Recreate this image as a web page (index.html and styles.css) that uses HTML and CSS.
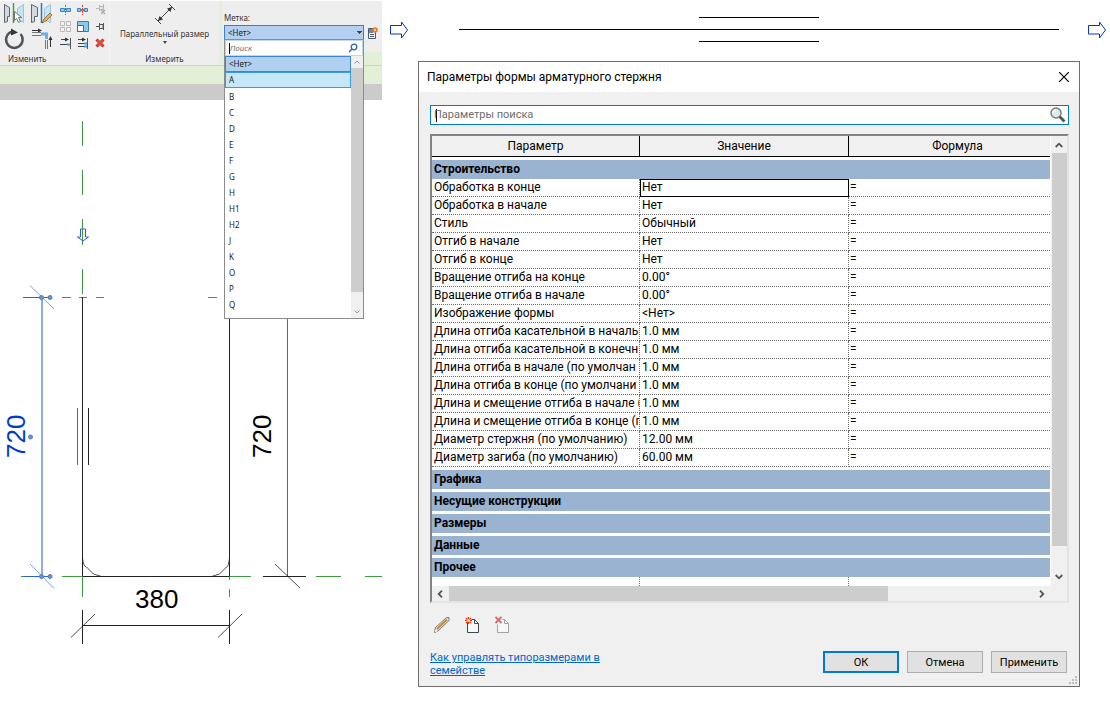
FILE: index.html
```html
<!DOCTYPE html>
<html lang="ru">
<head>
    <meta charset="UTF-8">
    <meta name="viewport" content="width=device-width, initial-scale=1.0">
    <title>Параметры формы арматурного стержня</title>
    <link rel="stylesheet" href="styles.css">
</head>
<body>
    <div class="sketch">
        <div class="ribbon">
            <div class="panel panel-edit">
                <svg class="tools" width="109" height="50" viewBox="0 1 109 50">
                    <!-- mirror by axis -->
                    <path d="M4.500 4.500l5 3v9h-2v5l-3 1z" fill="#d5d9de" stroke="#5d6670"/>
                    <path d="M17.500 8.500l6-4v18l-6-3z" fill="#c4e4f7" stroke="#9dc4dc"/>
                    <path d="M13.500 3v20" stroke="#3fa535" stroke-width="1.500"/>
                    <path d="M14.500 11.500v9l2-2 2 4 2-1-2-4h3z" fill="#fff" stroke="#555" stroke-width=".8"/>
                    <!-- mirror by drawn line -->
                    <path d="M31.500 4.500l6 3v9h-3v5l-3 1z" fill="#d5d9de" stroke="#5d6670"/>
                    <path d="M44.500 8.500l6-4v18l-6-3z" fill="#c4e4f7" stroke="#9dc4dc"/>
                    <path d="M41.500 3v20" stroke="#2378c8" stroke-width="1.500"/>
                    <path d="M42 23l2-4 6-6 2 2-6 6z" fill="#f4ae3d" stroke="#6b5437" stroke-width=".7"/>
                    <!-- rotate -->
                    <path d="M20.500 34a8.300 8.300 0 1 1-8-2.500" fill="none" stroke="#4d5359" stroke-width="2.400"/>
                    <path d="M11 28.500l7 4-7 3z" fill="#33383d"/>
                    <!-- trim to corner -->
                    <path d="M32 32.500h9M32 35.500h9" stroke="#777"/>
                    <path d="M32 30.500h8" stroke="#333"/>
                    <path d="M38 28.500l4 2-4 2z" fill="#333"/>
                    <path d="M41 34h5.500v5" fill="none" stroke="#67b0e8" stroke-width="3"/>
                    <path d="M45.500 40v9M47.500 40v9" stroke="#777"/>
                    <path d="M50.500 47V38" stroke="#333"/>
                    <path d="M48.500 40l2-4 2 4z" fill="#333"/>
                    <!-- split -->
                    <path d="M60.500 8.500h4v3h-4zM66.500 8.500h4v3h-4z" fill="#8bc5ee" stroke="#3b88be"/>
                    <path d="M65.500 5v10" stroke="#d9483b" stroke-dasharray="2 1"/>
                    <path d="M77.500 8.500h3v3h-3zM84.500 8.500h3v3h-3z" fill="#8bc5ee" stroke="#3b88be"/>
                    <path d="M82.500 5v10" stroke="#d9483b" stroke-dasharray="2 1"/>
                    <circle cx="82.500" cy="10" r="1.500" fill="#d9483b"/>
                    <!-- unpin, disabled -->
                    <path d="M96 8.500h3M99.500 5v6M100 6.500h3v3h-3M103.500 4v7" fill="none" stroke="#b8b8b8"/>
                    <path d="M101 10l4 4m0-4l-4 4" stroke="#aaa" stroke-width="1.300"/>
                    <!-- array -->
                    <path d="M60.500 21.500h4v4h-4zM66.500 21.500h4v4h-4zM60.500 27.500h4v4h-4zM66.500 27.500h4v4h-4z" fill="#f2f2f2" stroke="#b9b9b9"/>
                    <!-- scale -->
                    <path d="M77.500 21.500h11v10h-11z" fill="#8cc7f0" stroke="#357fb1"/>
                    <path d="M77.500 25.500h6v6h-6z" fill="#fff" stroke="#566"/>
                    <!-- pin -->
                    <path d="M96 26.500h3M99.500 23v7M100 24.500h3v4h-3M103.500 23v7" fill="none" stroke="#555"/>
                    <!-- trim / extend -->
                    <path d="M61 39.500h6M60 44.500h7" stroke="#444"/>
                    <path d="M65 37.500l4 2-4 2z" fill="#333"/>
                    <path d="M67 44.500h3" stroke="#409be0" stroke-width="2"/>
                    <path d="M70.500 38v11" stroke="#555"/>
                    <path d="M78 39.500h5M78 43.500h6M78 46.500h6" stroke="#444"/>
                    <path d="M82 37.500l4 2-4 2z" fill="#333"/>
                    <path d="M84 43.500h3M84 46.500h3" stroke="#409be0" stroke-width="2"/>
                    <path d="M87.500 38v11" stroke="#555"/>
                    <!-- delete -->
                    <path d="M96.500 39.500l7 7m0-7l-7 7" stroke="#a32820" stroke-width="3"/>
                    <path d="M97 40l6 6m0-6l-6 6" stroke="#f04a3c" stroke-width="1.800"/>
                </svg>
                <span class="panel-name">Изменить</span>
            </div>
            <div class="panel panel-measure">
                <svg width="22" height="22" viewBox="0 0 22 22">
                    <path d="M4 18L18 4" stroke="#444"/>
                    <path d="M4 18l1.500-5 3.500 3.500zM18 4l-5 1.500 3.500 3.500z" fill="#333"/>
                    <path d="M1 15l6 6M15 1l6 6" stroke="#444"/>
                </svg>
                <span class="tool-name">Параллельный размер</span>
                <svg width="4" height="3" viewBox="0 0 4 3"><path d="M0 0h4l-2 3z" fill="#444"/></svg>
                <span class="panel-name">Измерить</span>
            </div>
            <div class="panel panel-label">
                <label for="mark">Метка:</label>
                <div class="mark-row">
                    <select id="mark" class="mark"><option>&lt;Нет&gt;</option></select>
                    <svg width="10" height="12" viewBox="0 0 10 12">
                        <path d="M.5 1.500h7v10h-7z" fill="#e8f1fa" stroke="#4c5966"/>
                        <path d="M1 2h4v4H1z" fill="#5b88b5"/>
                        <path d="M2 7.500h4M2 9.500h4" stroke="#4c5966"/>
                        <circle cx="7" cy="3" r="2" fill="#ffc98a" stroke="#e87722" stroke-width="1.500"/>
                    </svg>
                </div>
                <div class="popup">
                    <div class="popup-search">
                        <span class="caret"></span>
                        <input type="text" placeholder="Поиск" aria-label="Поиск">
                        <svg width="10" height="10" viewBox="0 0 10 10">
                            <circle cx="6" cy="4" r="2.800" fill="#fff" stroke="#2668b4" stroke-width="1.300"/>
                            <path d="M4 6L1 9" stroke="#2668b4" stroke-width="1.500"/>
                        </svg>
                    </div>
                    <div class="popup-body">
                        <ul class="marks">
                            <li class="current">&lt;Нет&gt;</li>
                            <li class="hover">A</li>
                            <li>B</li>
                            <li>C</li>
                            <li>D</li>
                            <li>E</li>
                            <li>F</li>
                            <li>G</li>
                            <li>H</li>
                            <li>H1</li>
                            <li>H2</li>
                            <li>J</li>
                            <li>K</li>
                            <li>O</li>
                            <li>P</li>
                            <li>Q</li>
                        </ul>
                        <div class="popup-scroll">
                            <svg width="6" height="4" viewBox="0 0 6 4"><path d="M.5 3.500L3 1l2.500 2.500" fill="none" stroke="#999"/></svg>
                            <div class="thumb"></div>
                            <svg width="6" height="4" viewBox="0 0 6 4"><path d="M.5.500L3 3 5.500.500" fill="none" stroke="#999"/></svg>
                        </div>
                    </div>
                </div>
            </div>
        </div>
        <div class="options-bar"></div>
        <div class="view-bar"></div>

        <svg class="drawing" width="382" height="608" viewBox="0 100 382 608">
            <!-- reference planes -->
            <g class="plane">
                <path d="M82.500 121v25M82.500 170v25M82.500 219v26M82.500 269v25"/>
                <path d="M62 297.500h9M79 297.500h8M96 297.500h8M208 297.500h9"/>
                <path d="M21 576.500h4M62 576.500h20M230 576.500h21M316 576.500h25M365 576.500h17"/>
                <path d="M82.500 577v20M229.500 577v3M229.500 589v8"/>
            </g>
            <!-- rebar shape -->
            <g class="bar">
                <path d="M82.500 297v279.500h147V318"/>
                <path d="M82.500 558q1 9 4 9l7 7 8 2.500M229.500 558q-1 9-3 9l-7 7-8 2.500" class="thin"/>
                <path d="M77.500 408v57" class="grey"/>
                <path d="M88.500 408v57"/>
            </g>
            <!-- dimensions -->
            <g class="bar">
                <path d="M82.500 610v34M229.500 610v34M82.500 625.500h147"/>
                <path d="M71 637.500L95 614M218 637.500L242 614" class="thin"/>
                <path d="M287.500 318v258" class="grey"/>
                <path d="M263 576.500h43"/>
                <path d="M275 564L300 588" class="thin"/>
            </g>
            <g class="picked">
                <path d="M42 297v279" class="wide"/>
                <path d="M23 297.500h28M23 576.500h28"/>
                <path d="M30 285.500L54 309M30 564L54 588.500" class="soft"/>
                <path d="M80.500 229v8h-3l5.500 4 5.500-4h-3v-8z"/>
                <circle cx="41.500" cy="297.500" r="2"/>
                <circle cx="50" cy="297.500" r="2"/>
                <circle cx="41.500" cy="576.500" r="2"/>
                <circle cx="50" cy="576.500" r="2"/>
                <circle cx="30.500" cy="437" r="2"/>
            </g>
            <text class="dim" x="135" y="608">380</text>
            <text class="dim" transform="translate(271 458) rotate(-90)">720</text>
            <text class="dim dim-picked" transform="translate(25 458) rotate(-90)">720</text>
        </svg>
    </div>

    <div class="work">
        <div class="section-view">
            <svg width="18" height="18" viewBox="0 0 18 18"><path d="M.5 4.500h11v-3.500l6 8-6 8v-4h-11z" class="flip"/></svg>
            <svg class="section-lines" height="60">
                <line x1="40%" x2="60%" y1="17.500" y2="17.500"/>
                <line x1="0" x2="100%" y1="29.500" y2="29.500"/>
                <line x1="40%" x2="60%" y1="41.500" y2="41.500"/>
            </svg>
            <svg width="18" height="18" viewBox="0 0 18 18"><path d="M.5 4.500h11v-3.500l6 8-6 8v-4h-11z" class="flip"/></svg>
        </div>

        <div class="dialog" role="dialog" aria-labelledby="dialog-title">
            <div class="title-bar">
                <span id="dialog-title">Параметры формы арматурного стержня</span>
                <button class="close" aria-label="Закрыть">
                    <svg width="10" height="10" viewBox="0 0 10 10"><path d="M0 0l10 10M10 0L0 10" stroke="#000" stroke-width="1.200"/></svg>
                </button>
            </div>

            <div class="dialog-body">
                <div class="search">
                    <span class="caret"></span>
                    <input type="text" placeholder="Параметры поиска" aria-label="Параметры поиска">
                    <svg width="16" height="16" viewBox="0 0 16 16">
                        <path d="M9.500 9.500l5 5" stroke="#555" stroke-width="2.800"/>
                        <circle cx="6" cy="6" r="5" fill="#dcecee" stroke="#777" stroke-width="1.400"/>
                        <path d="M3 6a3 3 0 0 1 3-3" fill="none" stroke="#fff" stroke-width="1.500"/>
                    </svg>
                </div>

                <div class="grid">
                    <div class="grid-top">
                        <table class="params">
                            <colgroup><col class="col-name"><col class="col-value"><col></colgroup>
                            <thead>
                                <tr><th>Параметр</th><th>Значение</th><th>Формула</th></tr>
                            </thead>
                            <tbody>
                                <tr class="group"><th colspan="3">Строительство</th></tr>
                                <tr><td>Обработка в конце</td><td class="active">Нет</td><td>=</td></tr>
                                <tr><td>Обработка в начале</td><td>Нет</td><td>=</td></tr>
                                <tr><td>Стиль</td><td>Обычный</td><td>=</td></tr>
                                <tr><td>Отгиб в начале</td><td>Нет</td><td>=</td></tr>
                                <tr><td>Отгиб в конце</td><td>Нет</td><td>=</td></tr>
                                <tr><td>Вращение отгиба на конце</td><td>0.00°</td><td>=</td></tr>
                                <tr><td>Вращение отгиба в начале</td><td>0.00°</td><td>=</td></tr>
                                <tr><td>Изображение формы</td><td>&lt;Нет&gt;</td><td>=</td></tr>
                                <tr><td>Длина отгиба касательной в начальн</td><td>1.0 мм</td><td>=</td></tr>
                                <tr><td>Длина отгиба касательной в конечн</td><td>1.0 мм</td><td>=</td></tr>
                                <tr><td>Длина отгиба в начале (по умолчан</td><td>1.0 мм</td><td>=</td></tr>
                                <tr><td>Длина отгиба в конце (по умолчани</td><td>1.0 мм</td><td>=</td></tr>
                                <tr><td>Длина и смещение отгиба в начале (</td><td>1.0 мм</td><td>=</td></tr>
                                <tr><td>Длина и смещение отгиба в конце (п</td><td>1.0 мм</td><td>=</td></tr>
                                <tr><td>Диаметр стержня (по умолчанию)</td><td>12.00 мм</td><td>=</td></tr>
                                <tr><td>Диаметр загиба (по умолчанию)</td><td>60.00 мм</td><td>=</td></tr>
                                <tr class="group"><th colspan="3">Графика</th></tr>
                                <tr class="group"><th colspan="3">Несущие конструкции</th></tr>
                                <tr class="group"><th colspan="3">Размеры</th></tr>
                                <tr class="group"><th colspan="3">Данные</th></tr>
                                <tr class="group"><th colspan="3">Прочее</th></tr>
                                <tr class="rest"><td></td><td></td><td></td></tr>
                            </tbody>
                        </table>
                        <div class="vscroll">
                            <svg width="8" height="6" viewBox="0 0 8 6"><path d="M.7 5L4 1.700 7.300 5" class="chevron"/></svg>
                            <div class="thumb"></div>
                            <svg width="8" height="6" viewBox="0 0 8 6"><path d="M.7 1L4 4.300 7.300 1" class="chevron"/></svg>
                        </div>
                    </div>
                    <div class="hscroll">
                        <svg width="6" height="8" viewBox="0 0 6 8"><path d="M5 .7L1.700 4 5 7.300" class="chevron"/></svg>
                        <div class="track"><div class="thumb"></div></div>
                        <svg width="6" height="8" viewBox="0 0 6 8"><path d="M1 .7L4.300 4 1 7.300" class="chevron"/></svg>
                    </div>
                </div>

                <div class="actions">
                    <button aria-label="Изменить параметр">
                        <svg width="16" height="18" viewBox="0 0 16 18">
                            <path d="M.5 16.500l1-5 11-10h2.500v3l-11 10.500z" fill="#f3e2c4" stroke="#777"/>
                            <path d="M3 13L13 3.500" stroke="#c08a38" stroke-width="1.800"/>
                            <path d="M1 16l2.500-.5-2-2z" fill="#fff"/>
                        </svg>
                    </button>
                    <button aria-label="Создать параметр">
                        <svg width="16" height="18" viewBox="0 0 16 18">
                            <path d="M3.500 6.500v10h11v-9l-4-4h-3" fill="#f7f7f7" stroke="#3f4650"/>
                            <path d="M10.500 3.500v4h4" fill="none" stroke="#3f4650"/>
                            <path d="M4.500 1v7M1 4.500h7M2 2l5 5M7 2L2 7" stroke="#d8281c" stroke-width="1.200"/>
                            <circle cx="4.500" cy="4.500" r="1.700" fill="#ffd93b"/>
                        </svg>
                    </button>
                    <button aria-label="Удалить параметр">
                        <svg width="16" height="18" viewBox="0 0 16 18">
                            <path d="M3.500 8.500v8h11v-9l-4-4h-2" fill="#f7f7f7" stroke="#a3a3a3"/>
                            <path d="M10.500 3.500v4h4" fill="none" stroke="#a3a3a3"/>
                            <path d="M1.500 1l6 6M7.500 1l-6 6" stroke="#d56a6a" stroke-width="1.800"/>
                        </svg>
                    </button>
                </div>

                <div class="footer">
                    <a href="#">Как управлять типоразмерами в семействе</a>
                    <div class="buttons">
                        <button class="btn default">ОК</button>
                        <button class="btn">Отмена</button>
                        <button class="btn">Применить</button>
                    </div>
                </div>
            </div>
            <svg class="grip" width="8" height="8" viewBox="0 0 8 8">
                <path d="M6 0h2v2H6zM3 3h2v2H3zM6 3h2v2H6zM0 6h2v2H0zM3 6h2v2H3zM6 6h2v2H6z" fill="#bfbfbf"/>
            </svg>
        </div>
    </div>
</body>
</html>
```
FILE: styles.css
```css
* {
    box-sizing: border-box;
}

body {
    margin: 0;
    display: flex;
    align-items: flex-start;
    background: #fff;
    color: #000;
    font-family: Roboto, "Noto Sans", sans-serif;
    font-size: 12px;
}

svg {
    display: block;
    flex: none;
}

button, input, select {
    font: inherit;
    color: inherit;
}

/* Left side: ribbon and sketch */
.sketch {
    flex: none;
    width: 382px;
    padding-top: 1px;
}

.ribbon {
    display: flex;
    height: 64px;
    background: #e4efd8;
    color: #333;
    font-family: "Noto Sans", sans-serif;
    font-size: 8px;
    line-height: 12px;
}

.panel {
    display: flex;
    flex-direction: column;
    align-items: center;
    background: #eee;
}

.panel-edit {
    width: 110px;
    align-items: flex-start;
    border-right: 1px solid #f4f4f4;
}

.panel-edit .panel-name {
    padding-left: 8px;
}

.panel-measure {
    width: 109px;
    padding-top: 2px;
}

.panel-measure .tool-name {
    margin: 3px 0 1px;
}

.panel-name {
    margin-top: auto;
}

.panel-label {
    position: relative;
    flex: 1;
    height: 51px;
    margin-left: 3px;
    padding: 11px 2px 0;
    align-items: stretch;
}

.mark-row {
    display: flex;
    align-items: center;
    gap: 4px;
    margin-top: 1px;
}

.mark {
    appearance: none;
    width: 140px;
    height: 15px;
    padding: 0 3px;
    border: 1px solid #3c7fc9;
    border-radius: 0;
    background: linear-gradient(#444, #444) 132px 5px / 5px 1px no-repeat,
        linear-gradient(#444, #444) 133px 6px / 3px 1px no-repeat,
        linear-gradient(#444, #444) 134px 7px / 1px 1px no-repeat,
        #b3d0f0;
    color: #222;
}

.popup {
    position: absolute;
    top: 38px;
    left: 2px;
    z-index: 2;
    width: 140px;
    border: 1px solid #8c8c8c;
    background: #fff;
    color: #222;
}

.popup-search {
    display: flex;
    align-items: center;
    height: 16px;
    padding: 0 4px 0 3px;
    border: 1px solid #c2d7ee;
}

.popup-search input {
    flex: 1;
    min-width: 0;
    padding: 0;
    border: 0;
    outline: 0;
    background: none;
    font-style: italic;
}

.caret {
    width: 1px;
    height: 11px;
    background: #000;
}

.popup-body {
    display: flex;
}

.marks {
    flex: 1;
    margin: 0;
    padding: 0 0 6px;
    list-style: none;
}

.marks li {
    height: 16px;
    padding: 2px 3px 0;
    border: 1px solid transparent;
}

.marks .current {
    padding-top: 1px;
    border-color: #3c86d4;
    background: #b0d0ef;
}

.marks .hover {
    padding-top: 1px;
    border-color: #3c9ade;
    background: #c6e7f8;
}

.popup-scroll {
    display: flex;
    flex-direction: column;
    align-items: center;
    gap: 4px;
    width: 12px;
    padding: 4px 0;
    background: #f0f0f0;
}

.popup-scroll .thumb {
    flex: 1;
    align-self: stretch;
    margin-bottom: 14px;
    background: #cdcdcd;
}

.options-bar {
    height: 19px;
    border-top: 1px solid #cfd6c8;
    background: #e4efd8;
}

.view-bar {
    height: 16px;
    background: #cbcbcb;
}

.drawing path {
    fill: none;
}

.plane {
    stroke: #3f9b3f;
}

.bar {
    stroke: #222;
}

.bar .grey {
    stroke: #666;
}

.bar .thin {
    stroke-width: 0.8;
}

.picked {
    stroke: #2f5fd0;
}

.picked .wide {
    stroke: #8eabec;
    stroke-width: 2;
}

.picked .soft {
    stroke: #7d9fe6;
}

.picked circle {
    fill: #5b9ae6;
    stroke: #5c7a9c;
}

.dim {
    font-family: "Liberation Sans", Arial, sans-serif;
    font-size: 26px;
}

.dim-picked {
    fill: #003cc8;
}

/* Right side: section view and dialog */
.work {
    flex: 1;
    min-width: 0;
}

.section-view {
    display: flex;
    align-items: center;
    height: 60px;
    margin-bottom: 1px;
    padding: 0 4px 0 8px;
}

.section-lines {
    flex: 1;
    min-width: 0;
    margin: 0 29px 0 51px;
    stroke: #000;
}

.flip {
    fill: #fff;
    stroke: #0038b8;
}

.dialog {
    position: relative;
    margin: 0 30px 0 36px;
    border: 1px solid #6d6d6d;
    background: #f0f0f0;
}

.title-bar {
    display: flex;
    align-items: center;
    justify-content: space-between;
    height: 30px;
    padding: 0 10px 0 8px;
    background: #fff;
}

.close {
    padding: 0;
    border: 0;
    background: none;
}

.dialog-body {
    padding: 13px 10px 9px 11px;
}

.search {
    display: flex;
    align-items: center;
    height: 20px;
    padding: 0 2px 0 5px;
    border: 1px solid #0078d7;
    background: #fff;
    font-size: 11px;
}

.search input {
    flex: 1;
    min-width: 0;
    margin-left: -3px;
    padding: 0 0 1px;
    border: 0;
    outline: 0;
    background: none;
}

.search .caret {
    height: 13px;
}

input::placeholder {
    color: #6d6d6d;
    opacity: 1;
}

.grid {
    margin-top: 9px;
    border: 2px solid #e3e3e3;
    border-top-color: #828282;
    border-left-color: #828282;
    background: #fff;
}

.grid-top {
    display: flex;
    gap: 1px;
}

.params {
    flex: none;
    width: calc(100% - 17px);
    table-layout: fixed;
    border-spacing: 0;
    line-height: 16px;
}

.col-name {
    width: 208px;
}

.col-value {
    width: 209px;
}

.params th, .params td {
    padding: 0 2px;
    overflow: hidden;
    white-space: nowrap;
    text-align: left;
}

.params thead th {
    height: 21px;
    border-right: 1px solid #000;
    border-bottom: 1px solid #000;
    background: #f0f0f0;
    font-weight: normal;
    text-align: center;
}

.params td {
    height: 18px;
    padding-bottom: 1px;
    border-right: 1px dotted #6d6d6d;
    border-bottom: 1px dotted #6d6d6d;
}

.params td:first-child {
    padding-right: 0;
}

.params td:last-child, .params thead th:last-child {
    border-right: 0;
}

/* the formula column runs on under the scrollbar */
.params thead th:last-child {
    padding-left: 18px;
}

.params td:last-child {
    padding-left: 1px;
}

.params .group th {
    height: 22px;
    padding-bottom: 1px;
    border-top: 3px solid #fff;
    background: #99b3d1;
}

.params .active {
    outline: 1px solid #000;
    outline-offset: -1px;
}

.params .rest td {
    height: 9px;
    border-bottom: 0;
}

.vscroll {
    display: flex;
    flex-direction: column;
    align-items: center;
    width: 16px;
    padding: 6px 0;
    background: #f0f0f0;
}

.vscroll .thumb {
    flex: 1;
    width: 15px;
    margin: 5px 0 28px;
    background: #cdcdcd;
}

.hscroll {
    display: flex;
    align-items: center;
    height: 15px;
    padding: 0 22px 0 5px;
    background: #f0f0f0;
}

.track {
    flex: 1;
    margin: 0 5px 0 6px;
}

.track .thumb {
    width: 75%;
    height: 15px;
    background: #cdcdcd;
}

.chevron {
    fill: none;
    stroke: #555;
    stroke-width: 1.800;
}

.actions {
    display: flex;
    gap: 14px;
    margin: 13px 0 0 4px;
}

.actions button {
    padding: 0;
    border: 0;
    background: none;
}

.footer {
    display: flex;
    align-items: flex-start;
    justify-content: space-between;
    margin-top: 17px;
    font-size: 11px;
    line-height: 13px;
}

.footer a {
    width: 172px;
    color: #0066cc;
}

.buttons {
    display: flex;
    gap: 8px;
    margin-right: 2px;
}

.btn {
    width: 76px;
    height: 22px;
    padding: 0;
    border: 1px solid #adadad;
    background: #e1e1e1;
}

.btn.default {
    border: 2px solid #0078d7;
}

.grip {
    position: absolute;
    right: 2px;
    bottom: 2px;
}
```
